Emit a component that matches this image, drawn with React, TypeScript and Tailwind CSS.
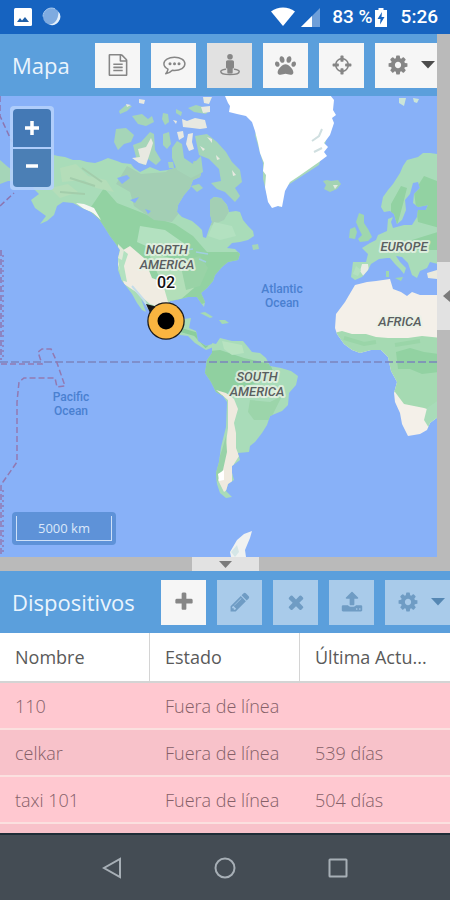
import { useState } from "react";
import type { ReactNode } from "react";
import { FaPaw } from "react-icons/fa";

const ICONOS = {
  archivo:
    "M1596 380q28 28 48 76t20 88v1152q0 40-28 68t-68 28h-1344q-40 0-68-28t-28-68v-1600q0-40 28-68t68-28h896q40 0 88 20t76 48zm-444-244v376h376q-10-29-22-41l-313-313q-12-12-41-22zm384 1528v-1024h-416q-40 0-68-28t-28-68v-416h-768v1536h1280zm-1024-864q0-14 9-23t23-9h704q14 0 23 9t9 23v64q0 14-9 23t-23 9h-704q-14 0-23-9t-9-23v-64zm736 224q14 0 23 9t9 23v64q0 14-9 23t-23 9h-704q-14 0-23-9t-9-23v-64q0-14 9-23t23-9h704zm0 256q14 0 23 9t9 23v64q0 14-9 23t-23 9h-704q-14 0-23-9t-9-23v-64q0-14 9-23t23-9h704z",
  mira:
    "M1325 1024h-109q-26 0-45-19t-19-45v-128q0-26 19-45t45-19h109q-32-108-112.5-188.5t-188.5-112.5v109q0 26-19 45t-45 19h-128q-26 0-45-19t-19-45v-109q-108 32-188.5 112.5t-112.5 188.5h109q26 0 45 19t19 45v128q0 26-19 45t-45 19h-109q32 108 112.5 188.5t188.5 112.5v-109q0-26 19-45t45-19h128q26 0 45 19t19 45v109q108-32 188.5-112.5t112.5-188.5zm339-192v128q0 26-19 45t-45 19h-143q-37 161-154.5 278.5t-278.5 154.5v143q0 26-19 45t-45 19h-128q-26 0-45-19t-19-45v-143q-161-37-278.5-154.5t-154.5-278.5h-143q-26 0-45-19t-19-45v-128q0-26 19-45t45-19h143q37-161 154.5-278.5t278.5-154.5v-143q0-26 19-45t45-19h128q26 0 45 19t19 45v143q161 37 278.5 154.5t154.5 278.5h143q26 0 45 19t19 45z",
  engrane:
    "M1152 896q0-106-75-181t-181-75-181 75-75 181 75 181 181 75 181-75 75-181zm512-109v222q0 12-8 23t-20 13l-185 28q-19 54-39 91 35 50 107 138 10 12 10 25t-9 23q-27 37-99 108t-94 71q-12 0-26-9l-138-108q-44 23-91 38-16 136-29 186-7 28-36 28h-222q-14 0-24.5-8.5t-11.5-21.5l-28-184q-49-16-90-37l-141 107q-10 9-25 9-14 0-25-11-126-114-165-168-7-10-7-23 0-12 8-23 15-21 51-66.5t54-70.5q-27-50-41-99l-183-27q-13-2-21-12.5t-8-23.5v-222q0-12 8-23t19-13l186-28q14-46 39-92-40-57-107-138-10-12-10-24 0-10 9-23 26-36 98.5-107.5t94.5-71.5q13 0 26 10l138 107q44-23 91-38 16-136 29-186 7-28 36-28h222q14 0 24.5 8.5t11.5 21.5l28 184q49 16 90 37l142-107q9-9 24-9 13 0 25 10 129 119 165 170 7 8 7 22 0 12-8 23-15 21-51 66.5t-54 70.5q26 50 41 98l183 28q13 2 21 12.5t8 23.5z",
  mas:
    "M1600 736v192q0 40-28 68t-68 28h-416v416q0 40-28 68t-68 28h-192q-40 0-68-28t-28-68v-416h-416q-40 0-68-28t-28-68v-192q0-40 28-68t68-28h416v-416q0-40 28-68t68-28h192q40 0 68 28t28 68v416h416q40 0 68 28t28 68z",
  lapiz:
    "M491 1536l91-91-235-235-91 91v107h128v128h107zm523-928q0-22-22-22-10 0-17 7l-542 542q-7 7-7 17 0 22 22 22 10 0 17-7l542-542q7-7 7-17zm-54-192l416 416-832 832h-416v-416zm683 96q0 53-37 90l-166 166-416-416 166-165q36-38 90-38 53 0 91 38l235 234q37 39 37 91z",
  cruz:
    "M1490 1322q0 40-28 68l-136 136q-28 28-68 28t-68-28l-294-294-294 294q-28 28-68 28t-68-28l-136-136q-28-28-28-68t28-68l294-294-294-294q-28-28-28-68t28-68l136-136q28-28 68-28t68 28l294 294 294-294q28-28 68-28t68 28l136 136q28 28 28 68t-28 68l-294 294 294 294q28 28 28 68z",
  subir:
    "M1344 1472q0-26-19-45t-45-19-45 19-19 45 19 45 45 19 45-19 19-45zm256 0q0-26-19-45t-45-19-45 19-19 45 19 45 45 19 45-19 19-45zm128-224v320q0 40-28 68t-68 28h-1472q-40 0-68-28t-28-68v-320q0-40 28-68t68-28h427q21 56 70.5 92t110.5 36h256q61 0 110.5-36t70.5-92h427q40 0 68 28t28 68zm-325-648q-17 40-59 40h-256v448q0 26-19 45t-45 19h-256q-26 0-45-19t-19-45v-448h-256q-42 0-59-40-17-39 14-69l448-448q18-19 45-19t45 19l448 448q31 30 14 69z",
};

const DISPOSITIVOS = [
  { id: 1, nombre: "110", estado: "Fuera de línea", actualizacion: "" },
  { id: 2, nombre: "celkar", estado: "Fuera de línea", actualizacion: "539 días" },
  { id: 3, nombre: "taxi 101", estado: "Fuera de línea", actualizacion: "504 días" },
  { id: 4, nombre: "", estado: "", actualizacion: "" },
];

function Icono({ nombre, size = 22 }: { nombre: keyof typeof ICONOS; size?: number }) {
  return (
    <svg width={size} height={size} viewBox="0 0 1792 1792" fill="currentColor" aria-hidden="true">
      <path d={ICONOS[nombre]} />
    </svg>
  );
}

function Comentario() {
  return (
    <svg width="24" height="24" viewBox="0 0 24 24" fill="none" stroke="currentColor" strokeWidth="1.5" aria-hidden="true">
      <path d="M12.500 4.200c6 0 10.400 2.800 10.400 6.600s-4.400 6.600-10.400 6.600c-.8 0-1.500 0-2.200-.1-1.700 1.900-3.800 3-6.600 3.400 1.400-1.300 2.100-2.700 2.300-4.600C3.400 14.900 1.900 13 1.900 10.800c0-3.800 4.600-6.600 10.600-6.600z" strokeLinejoin="round" />
      <g fill="currentColor" stroke="none">
        <circle cx="8" cy="10.800" r="1.500" />
        <circle cx="12.500" cy="10.800" r="1.500" />
        <circle cx="17" cy="10.800" r="1.500" />
      </g>
    </svg>
  );
}

function Persona() {
  return (
    <svg width="22" height="24" viewBox="0 0 22 24" fill="currentColor" aria-hidden="true">
      <circle cx="11" cy="3.800" r="2.800" />
      <path d="M8.800 7.200h4.400c1.100 0 1.800.7 1.800 1.800v5.200c0 .8-.5 1.300-1.300 1.300v3.700c0 .8-.5 1.300-1.300 1.300H9.600c-.8 0-1.300-.5-1.300-1.300v-3.700C7.500 15.500 7 15 7 14.200V9c0-1.100.7-1.800 1.800-1.800z" />
      <path d="M6.500 16.200c-2.800.4-4.700 1.200-4.700 2.300 0 1.900 4.300 3.100 9.200 3.100s9.200-1.200 9.200-3.100c0-1.100-1.900-1.900-4.700-2.300" fill="none" stroke="currentColor" strokeWidth="1.500" strokeLinecap="round" />
    </svg>
  );
}

type BotonProps = { label: string; children: ReactNode; activo?: boolean; disabled?: boolean; menu?: boolean; onClick?: () => void };

function Boton({ label, children, activo, disabled, menu, onClick }: BotonProps) {
  const color = disabled ? "bg-[#a9cbea] text-[#6f9cc4]" : activo ? "bg-[#e1e1e1] text-[#868686]" : "bg-[#f6f6f6] text-[#868686]";
  return (
    <button
      type="button"
      aria-label={label}
      disabled={disabled}
      onClick={onClick}
      className={`h-[45px] shrink-0 flex items-center ${menu ? "w-20 pl-3 gap-3" : "w-[45px] justify-center"} ${color}`}
    >
      {children}
      {menu && (
        <svg width="14" height="8" viewBox="0 0 14 8" className={disabled ? "fill-[#5587b3]" : "fill-[#4c4c4c]"} aria-hidden="true">
          <path d="M0 0h14L7 7.500z" />
        </svg>
      )}
    </button>
  );
}

function BarraEstado() {
  return (
    <div className="h-[34px] shrink-0 bg-[#1663c0] flex items-center pl-3.5 pr-3 text-white font-[Roboto,sans-serif] text-[19px] font-medium">
      <svg width="18" height="18" viewBox="0 0 18 18" aria-hidden="true">
        <rect width="18" height="18" rx="1.500" fill="#fff" />
        <path d="M3 14l3-4 2 2.500L11 9l4 5z" fill="#1f5fa8" />
      </svg>
      <svg width="20" height="20" viewBox="0 0 20 20" className="ml-2.5" aria-hidden="true">
        <circle cx="9.500" cy="9.500" r="8.500" fill="#7fabe0" />
        <path d="M16.500 4.500a8.500 8.500 0 01-10 13c5 .5 10-4 10-13z" fill="#e3effb" />
        <path d="M1 9.500a8.500 8.500 0 0112-7.700" fill="none" stroke="#a9c9ee" strokeWidth="1" />
      </svg>
      <div className="ml-auto flex items-center">
        <svg width="24" height="20" viewBox="0 0 24 20" fill="#fff" aria-hidden="true">
          <path d="M0 4.500C7-.8 17-.8 24 4.500L12 19z" />
        </svg>
        <svg width="19" height="19" viewBox="0 0 19 19" className="ml-1.5" aria-hidden="true">
          <path d="M19 0v19H0z" fill="#6f9fd9" />
          <path d="M11 8v11H0z" fill="#fff" />
        </svg>
        <span className="ml-3">83 %</span>
        <svg width="12" height="19" viewBox="0 0 12 19" className="ml-0.5" aria-hidden="true">
          <path d="M3.500 0h5v2H12v17H0V2h3.500z" fill="#fff" />
          <path d="M7 4L2.500 11H5.500L5 16.500 9.500 9H6.500z" fill="#1663c0" />
        </svg>
        <span className="ml-3.5">5:26</span>
      </div>
    </div>
  );
}

function Mapa() {
  return (
    <svg viewBox="0 96 437 461" preserveAspectRatio="xMidYMid slice" className="block w-full h-full" role="img" aria-label="Mapa mundial">
      <defs>
        <clipPath id="norte">
          <path d="M50 154L58 156 65 157 73 160 80 160 87 162 95 163 101 161 108 158 117 161 122 163 131 164 134 168 140 172 150 167 160 171 168 170 175 168 179 165 175 156 173 148 176 146 180 158 184 166 190 170 194 161 200 162 202 170 200 177 193 180 190 188 184 195 178 205 177 212 182 217 192 221 198 226 202 230 203 237 206 238 209 229 212 222 210 214 210 200 214 197 221 198 227 205 229 212 236 211 240 212 243 220 248 226 253 231 254 236 248 240 240 242 232 243 227 248 235 249 240 254 238 260 228 262 222 267 215 275 213 281 207 288 201 293 205 302 204 307 201 303 197 297 188 297 180 299 170 301 166 306 166 320 172 330 181 327 184 319 191 318 189 328 196 331 198 341 206 346 212 344 216 346 206 350 195 343 188 336 172 334 160 326 152 315 145 304 141 299 146 312 142 310 137 303 132 294 126 286 122 281 118 270 118 258 120 250 116 244 110 236 105 228 99 219 91 212 82 208 73 203 63 202 57 206 54 215 47 221 40 224 46 216 35 208 31 200 39 194 33 188 42 180 40 170z" />
        </clipPath>
        <clipPath id="sur">
          <path d="M212 343L216 344 220 338 232 341 243 341 248 347 252 352 260 353 266 358 270 366 281 368 291 371 298 376 296 385 289 393 288 405 282 411 270 416 267 425 262 433 255 442 250 446 249 452 238 453 240 460 232 466 232 473 234 480 228 484 226 491 232 497 226 498 220 493 217 484 216 473 219 462 221 447 226 427 227 402 223 396 216 392 211 382 205 373 207 360 212 353z" />
        </clipPath>
        <clipPath id="africa">
          <path d="M355 285L367 282 376 281 390 279 393 289 401 292 407 296 412 292 420 295 438 295 438 417 430 423 427 430 420 434 408 436 402 424 400 413 395 402 394 393 397 382 391 371 388 357 381 350 371 350 360 353 352 350 344 344 337 334 335 328 336 314 345 302z" />
        </clipPath>
        <clipPath id="europa">
          <path d="M438 154L430 153 423 153 418 157 407 160 403 166 400 173 393 184 388 190 383 197 381 207 384 212 390 211 394 214 397 224 402 220 406 210 405 200 410 194 413 183 418 182 420 188 414 194 413 203 418 207 428 205 426 210 418 210 417 217 412 225 404 225 393 228 391 222 393 217 388 219 387 231 378 235 376 240 370 243 362 248 368 254 366 262 353 262 351 277 355 280 362 277 368 270 371 264 379 259 387 258 390 258 395 264 400 269 404 274 406 268 400 262 396 256 402 257 408 263 412 275 417 278 420 271 427 268 430 262 438 264z" />
        </clipPath>
      </defs>
      <rect x="-200" y="-100" width="900" height="900" fill="#88b1f8" />

      <g clipPath="url(#norte)">
        <rect x="0" y="96" width="300" height="260" fill="#a9dcb9" />
        <path d="M104 188l13 15 18 7 20 8 20 6 18 12 14 16h40l10-20 20 30-30 20-40 20-30 12-30-40-25-20-20 8-14-14-10-22z" fill="#92d2a2" />
        <path d="M127 166l14 8 25-2 20-20 30 10-5 30-25 12-14 18-18-2-20-14-4-14-14-8z" fill="#a3cfb4" />
        <path d="M210 196l12 2 8 12-6 10-14 6z" fill="#a3cfb4" />
        <path d="M60 168l16-4 12 12 18 4 8 12-18-4-12-8-22 2zM50 188l18-4 10 8-18 6z" fill="#b4ddb9" />
        <path d="M70 178l25 8M82 168l20 14M60 192l25 2" stroke="#a3cdab" strokeWidth="2" fill="none" />
        <path d="M140 226l25 4 20 14 5 10-35-4-18-8zM214 222l18 4 4 10-16 4-12-4z" fill="#b3e1c0" />
        <path d="M120 252l10-6 14 12 8 20 16 6 2 20-8 4-12-4-14-12-12-8-6-20z" fill="#f0ece2" />
        <path d="M118 258l5-8 5 4-4 12 3 16-6-2z" fill="#b3e1c0" />
        <path d="M76 203l8 1 10 4 7 12-8-7-9-4z" fill="#f5f7f3" />
        <path d="M118 244l6 6-2 10-4-2z" fill="#dfe9d8" />
        <path d="M148 252l30 8 20 4-4 24-14 12-12 2-4-14z" fill="#b3dfb9" />
        <path d="M180 262l20-6 8 12-8 18-14 4z" fill="#99d3a6" />
        <path d="M196 252l12 2M199 259l7 3M186 250l7-1" stroke="#a0cfe0" strokeWidth="1.500" />
        <path d="M117 178l10-3 3 3-8 6zM130 200l9-3-4 6zM145 209l6 2-3 3zM78 178l3 3" fill="#88b1f8" />
        <path d="M132 286l12 14 5 11" stroke="#c4ddea" strokeWidth="2" fill="none" />
        <path d="M163 322l18 8 14 4 12 13" stroke="#8bce9c" strokeWidth="4" fill="none" />
      </g>

      {/* Ártico canadiense */}
      <g fill="#a5d5b8">
        <path d="M114 142l2-13 10-1 8 7-3 7-7 2-6 6zM119 111l7-6 6 1-5 5-7 3zM132 116l10-2 6 5 4-3 2 6-8 4-8-2zM163 113l5 1 1 8-4 3-3-6zM133 145l8-3 9-10 4 2 1 16 6 10-5 5-8-6-4 6-7-4zM163 134l6-2 2 12-4 5-4-4zM172 148l5-7 5 3 2 14 9 6 8-8 2 16-12 6-14-8-5-12zM188 108l8-3 14 4-4 5-12-2zM195 136l12-2 10 8 9 10 6 10 8 8 2 12-7 6 5 8-5 6-10-10-8-3-6-6 10-2-2-12-10-10-10-4zM191 186l8-2 4 4-6 4zM168 162l5 0 1 6-5 0zM252 245l6-1 1 5-6 1zM176 109l6 3-1 4-5-3zM0 160l8 7 12 8 12 7-10 5-8-6-6 0-8 3z" />
      </g>
      <g fill="#e8e9e1">
        <path d="M132 158l8-1-2-8 8-2 5-9 2 5-3 10-4 12-7-2zM182 119l5 2 8-3 10 2 2 8-7 1-8-1-9-1zM177 132l6-1 1 6-5 3zM188 134l5-1-1 9 2 7-5 2-3-7zM200 146l5 3-2 2zM216 155l4 4-3 1zM232 170l4 5-3 1zM207 137l5 2 0 4zM201 107l9-1 0 6-7 1zM203 97l9 0-3 7-5-1zM139 99l6 1-1 4-5-1zM126 104l5 1-4 2zM173 120l4 1-1 3z" />
      </g>

      {/* Groenlandia e Islandia */}
      <path d="M255 135l4 14 4 14 0 16 5 20 12 8 5-20 34-22 8-28-5-8-60-10z" fill="#a9d8ba" />
      <path d="M225 96l3 7 2 3-1 6 8 2 9 2 6 6 3 9 3 12 2 10 4 10-1 8 3 4-1 12 3 15 4 6 6-2 4 1 3-16 5-9 9-6 10-7 10-7 8-6-3-4 4-5-4-4 6-8 4-12-2-5 4-3-3-5 1-10-4-5z" fill="#fff" />
      <path d="M312 141l7-5 3-7M314 152l8-4" stroke="#d0dfe0" strokeWidth="2" fill="none" />
      <path d="M323 181l4-1 4 1 7-1 3 4-4 5-7 3-6-3 2-4z" fill="#a3d3b3" />
      <path d="M333 185l5 0-3 4z" fill="#e1ebe1" />
      <path d="M399 98l7 0-2 8-5-3zM413 98l6 1-2 4-3-1z" fill="#cbe5d8" />

      <g clipPath="url(#europa)">
        <rect x="340" y="140" width="100" height="150" fill="#a9dcb9" />
        <path d="M391 204l10-18 6 2-4 16-6 22-6-12zM414 192l10-16 16 6v46l-22-6zM412 240l26-8v18h-22z" fill="#92d2a2" />
        <path d="M362 264l6 0 1 8-5 5-4-6z" fill="#e9ece3" />
        <path d="M356 266l5 4-3 6-5-2z" fill="#b3e1c0" />
      </g>
      <path d="M359 213l5 2 0 8 4 6 4 8-4 4-8 1-2-3 4-4-3-6-3-7zM350 229l5-2 2 5-2 7-6-1zM386 271l3 0 0 6-3 0zM395 278l8-1-2 4z" fill="#9fd7ae" />
      <path d="M427 273l10-3v9l-9-1z" fill="#ebeade" />

      <g clipPath="url(#africa)">
        <rect x="330" y="275" width="110" height="170" fill="#f4f0e9" />
        <path d="M330 334l12-3 10 3 14 0 10 3 12 1 20 0 14-2 20 2v64l-12 8-6-2-20-4-9-12-10 1-60-20z" fill="#a5dab2" />
        <path d="M396 352l14-4 14 4 14 2v18l-16 2-12-5-12 0z" fill="#92d2a2" />
        <path d="M344 338l20 6 12-2M395 345l25-4" stroke="#9ad5a8" strokeWidth="4" fill="none" />
        <path d="M427 408l12-8v20l-10 8-5-8z" fill="#a9dcb9" />
      </g>

      <g clipPath="url(#sur)">
        <rect x="200" y="330" width="110" height="180" fill="#a9dcb9" />
        <path d="M200 352l20-2 24 8 26 6 6 14-30 8-15 12-18-4-15-22z" fill="#90d0a0" />
        <path d="M222 341l20 4 2 8-12 2-8-6z" fill="#b8e3c0" />
        <path d="M250 400l20 2 12-6-12 24-16 0-6-8z" fill="#9cd5aa" />
        <path d="M216 390l10 3 8 6 4 10-4 14 2 10 0 15 3 8-5 8-2 12 0 10-8 6-6-12 0-12 6-10 4-30 0-28z" fill="#efeadf" />
        <path d="M222 450l4-14 1 16-4 18-7 14-1-14z" fill="#98d2a7" />
        <path d="M218 474l6-4 0 10-5 1z" fill="#fff" />
      </g>
      <path d="M200 313l5-1 8 5-3 1-6-3zM219 320l6 0 4 3-7 1zM209 324l3 1z" fill="#a5dab2" />
      <path d="M252 531l-2 7-5 12 1 7h-15l-1-5 7-12 7-6z" fill="#f0f2f1" />
      <path d="M231 552l6-7 2 7-4 5z" fill="#d5e6e7" />

      {/* Ecuador y línea de cambio de fecha */}
      <g fill="none" strokeWidth="1.500">
        <path d="M0 362H437" stroke="#7b84bd" strokeDasharray="8 3" />
        <path d="M0 96v20l12 26M0 206l14-13M1 250v110" stroke="#8c75b0" strokeDasharray="6 3" />
        <path d="M1 364H42l-4-12 4-3h9l5 11 9 26-8 1-2-9H24l-5 4-2 20v60l-14 20-2 4v70" stroke="#9279b1" strokeDasharray="6 3" />
        <path d="M3 255v105M3 490v62" stroke="#8f7bb5" strokeDasharray="2 3" />
      </g>

      <g fontFamily="Roboto, sans-serif" textAnchor="middle" strokeLinejoin="round" paintOrder="stroke">
        <g fontSize="13" fontStyle="italic" fontWeight="500" fill="#5a5e60" stroke="#eaf2e6" strokeOpacity="0.8" strokeWidth="4">
          <text x="167" y="254">NORTH</text>
          <text x="167" y="269">AMERICA</text>
          <text x="257" y="381">SOUTH</text>
          <text x="257" y="396">AMERICA</text>
          <text x="404" y="251">EUROPE</text>
          <text x="400" y="326">AFRICA</text>
        </g>
        <g fontSize="12" fontWeight="500" fill="#4a80d0">
          <text x="282" y="293">Atlantic</text>
          <text x="282" y="307">Ocean</text>
          <text x="71" y="401">Pacific</text>
          <text x="71" y="415">Ocean</text>
        </g>
        <path d="M146 304l12 3-7 8z" fill="#161616" />
        <circle cx="166" cy="321" r="17.500" fill="#f9b540" stroke="#1b1b1b" strokeWidth="2.500" />
        <circle cx="166" cy="321" r="8.500" fill="#000" />
        <text x="166" y="288" fontSize="16" fontWeight="500" fill="#111" stroke="#fff" strokeWidth="3">02</text>
      </g>
    </svg>
  );
}

export default function App() {
  const [seguir, setSeguir] = useState(true);

  return (
    <div className="h-screen flex flex-col overflow-hidden bg-white font-['Open_Sans',sans-serif]">
      <BarraEstado />

      <div className="flex-1 min-h-0 flex bg-[#bababa]">
        <section className="flex-1 min-w-0 flex flex-col">
          <header className="h-[62px] shrink-0 bg-[#5b9fdc] flex items-center pl-3 overflow-hidden">
            <h1 className="w-[83px] shrink-0 text-[22px] text-[#eaf4fd]">Mapa</h1>
            <div className="flex gap-[11px]">
              <Boton label="Reportes"><Icono nombre="archivo" /></Boton>
              <Boton label="Eventos"><Comentario /></Boton>
              <Boton label="Seguir" activo={seguir} onClick={() => setSeguir(!seguir)}><Persona /></Boton>
              <Boton label="Rutas"><FaPaw size={21} /></Boton>
              <Boton label="Centrar"><Icono nombre="mira" /></Boton>
              <Boton label="Ajustes" menu><Icono nombre="engrane" /></Boton>
            </div>
          </header>

          <div className="relative flex-1 min-h-0">
            <Mapa />
            <div className="absolute left-2.5 top-2.5 flex flex-col gap-0.5 p-[3px] rounded bg-[#b4d0fb]/90">
              <button type="button" aria-label="Acercar" className="w-[38px] h-[38px] rounded-t-sm bg-[#4479b5] text-white flex items-center justify-center">
                <svg width="14" height="14" viewBox="0 0 14 14" stroke="currentColor" strokeWidth="3.500" aria-hidden="true"><path d="M0 7h14M7 0v14" /></svg>
              </button>
              <button type="button" aria-label="Alejar" className="w-[38px] h-[38px] rounded-b-sm bg-[#4b7fb5] text-white flex items-center justify-center">
                <svg width="14" height="14" viewBox="0 0 14 14" stroke="currentColor" strokeWidth="3.500" aria-hidden="true"><path d="M1 5h12" /></svg>
              </button>
            </div>
            <div className="absolute left-3 bottom-3 w-[104px] h-[33px] p-1 rounded bg-[#5e92d8]">
              <div className="h-full border border-t-0 border-[#cfe1f8] text-[#dbe8fa] text-[13px] leading-6 text-center">5000 km</div>
            </div>
          </div>
        </section>

        <div className="w-[13px] shrink-0 flex items-center">
          <button type="button" aria-label="Contraer panel derecho" className="w-full h-[68px] bg-[#e2e2e2] flex items-center justify-end">
            <svg width="8" height="12" viewBox="0 0 8 12" fill="#7b7b7b" aria-hidden="true"><path d="M8 0v12L1 6z" /></svg>
          </button>
        </div>
      </div>

      <div className="h-3.5 shrink-0 bg-[#bababa] flex justify-center">
        <button type="button" aria-label="Contraer dispositivos" className="w-[67px] h-full bg-[#e2e2e2] flex items-center justify-center">
          <svg width="13" height="7" viewBox="0 0 13 7" fill="#7b7b7b" aria-hidden="true"><path d="M0 0h13L6.500 7z" /></svg>
        </button>
      </div>

      <section className="shrink-0">
        <header className="h-[62px] bg-[#5b9fdc] flex items-center pl-3 overflow-hidden">
          <h2 className="w-[149px] shrink-0 text-[22px] text-[#eaf4fd]">Dispositivos</h2>
          <div className="flex gap-[11px]">
            <Boton label="Añadir"><Icono nombre="mas" /></Boton>
            <Boton label="Editar" disabled><Icono nombre="lapiz" /></Boton>
            <Boton label="Eliminar" disabled><Icono nombre="cruz" /></Boton>
            <Boton label="Enviar comando" disabled><Icono nombre="subir" /></Boton>
            <Boton label="Ajustes de dispositivo" menu disabled><Icono nombre="engrane" /></Boton>
          </div>
        </header>

        <div className="h-[200px] overflow-hidden">
          <table className="w-full table-fixed border-separate border-spacing-0 text-left text-lg">
            <thead>
              <tr className="text-[#5a5a5a]">
                <th className="h-[50px] pl-[15px] font-normal border-b-2 border-r border-[#d4d4d4]">Nombre</th>
                <th className="h-[50px] pl-[15px] font-normal border-b-2 border-r border-[#d4d4d4]">Estado</th>
                <th className="h-[50px] pl-[15px] font-normal border-b-2 border-[#d4d4d4]">Última Actu...</th>
              </tr>
            </thead>
            <tbody>
              {DISPOSITIVOS.map(d => (
                <tr key={d.id} className="bg-[#ffc8d0] even:bg-[#f8c2ca] text-[#856068] font-light">
                  <td className="h-[47px] pl-[15px] border-b-2 border-[#fbe0df]">{d.nombre}</td>
                  <td className="h-[47px] pl-[15px] border-b-2 border-[#fbe0df]">{d.estado}</td>
                  <td className="h-[47px] pl-[15px] border-b-2 border-[#fbe0df]">{d.actualizacion}</td>
                </tr>
              ))}
            </tbody>
          </table>
        </div>
      </section>

      <nav className="h-[67px] shrink-0 flex px-14 bg-[#444c54] border-t-2 border-[#1f2d37] text-[#a7afb6]">
        <button type="button" aria-label="Atrás" className="flex-1 flex items-center justify-center">
          <svg width="20" height="22" viewBox="0 0 20 22" fill="none" stroke="currentColor" strokeWidth="2" aria-hidden="true"><path d="M18 2v18L2 11z" /></svg>
        </button>
        <button type="button" aria-label="Inicio" className="flex-1 flex items-center justify-center">
          <svg width="22" height="22" viewBox="0 0 22 22" fill="none" stroke="currentColor" strokeWidth="2" aria-hidden="true"><circle cx="11" cy="11" r="9.500" /></svg>
        </button>
        <button type="button" aria-label="Recientes" className="flex-1 flex items-center justify-center">
          <svg width="20" height="20" viewBox="0 0 20 20" fill="none" stroke="currentColor" strokeWidth="2" aria-hidden="true"><rect x="1.500" y="1.500" width="17" height="17" rx="0.500" /></svg>
        </button>
      </nav>
    </div>
  );
}
